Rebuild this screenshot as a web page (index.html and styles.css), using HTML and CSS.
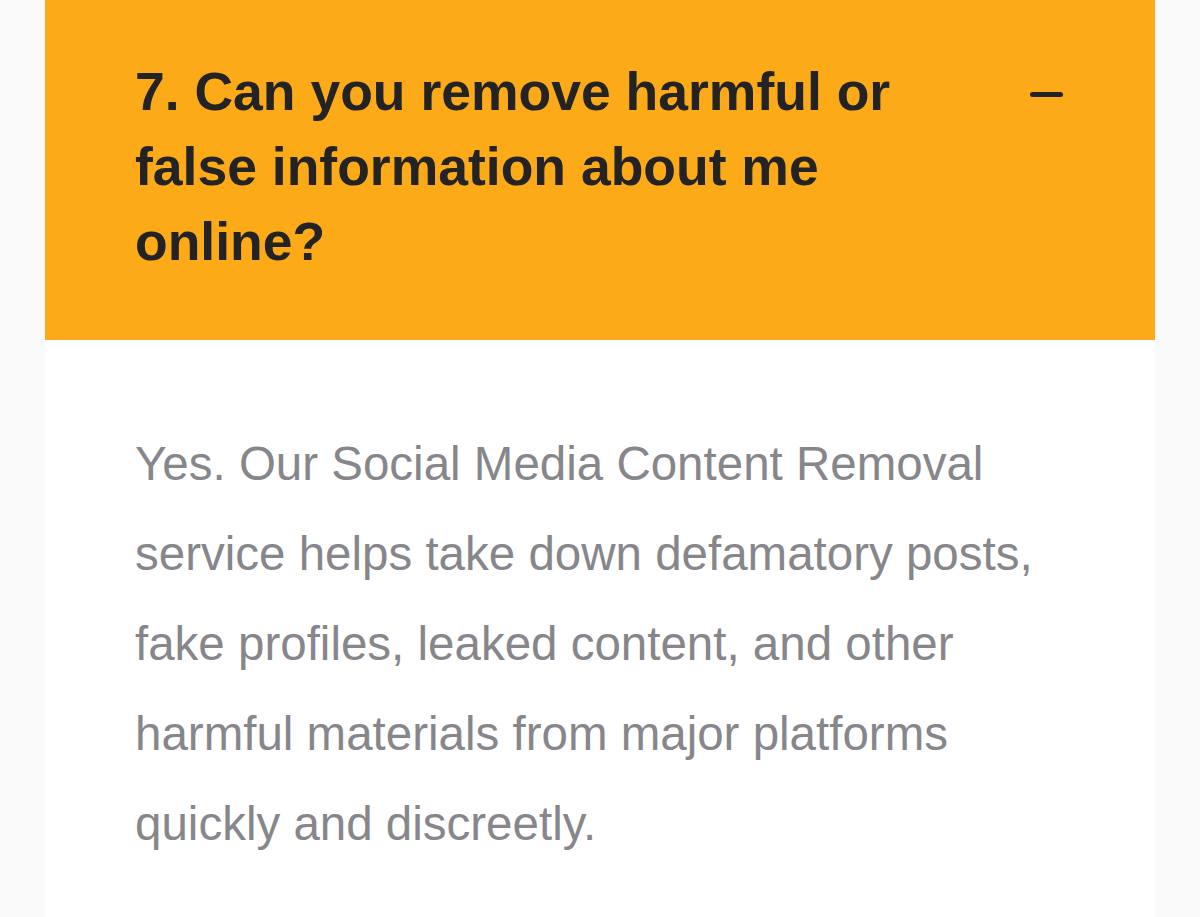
FILE: index.html
```html
<!DOCTYPE html>
<html lang="en">
<head>
<meta charset="utf-8">
<link rel="stylesheet" href="styles.css">
</head>
<body>
<div class="card">
  <div class="faq-header">
    <h2 class="faq-title">7. Can you remove harmful or false information about me online?</h2>
    <span class="toggle" aria-hidden="true"></span>
  </div>
  <div class="faq-body">
    <p class="faq-answer">Yes. Our Social Media Content Removal service helps take down defamatory posts, fake profiles, leaked content, and other harmful materials from major platforms quickly and discreetly.</p>
  </div>
</div>
</body>
</html>
```
FILE: styles.css
```css
html, body {
  margin: 0;
  padding: 0;
  background: #f9f9f9;
  height: 100%;
  overflow: hidden;
}
.card {
  margin: 0 45px;
  background: #ffffff;
  min-height: 917px;
}
.faq-header {
  background: #fdaa18;
  display: flex;
  align-items: flex-start;
  justify-content: space-between;
  gap: 40px;
  padding: 54px 92px 61px 90px;
}
.faq-title {
  margin: 0;
  flex: 1;
  max-width: 800px;
  font-family: "Liberation Sans", Arial, sans-serif;
  font-weight: 700;
  font-size: 53.5px;
  line-height: 75px;
  color: #232323;
}
.toggle {
  display: block;
  width: 33px;
  height: 5px;
  border-radius: 3px;
  background: #232323;
  margin-top: 38px;
  flex-shrink: 0;
}
.faq-body {
  padding: 79px 90px 40px 90px;
}
.faq-answer {
  margin: 0;
  font-family: "Liberation Sans", Arial, sans-serif;
  font-size: 47.5px;
  line-height: 90px;
  color: #86868b;
  max-width: 930px;
}
```
